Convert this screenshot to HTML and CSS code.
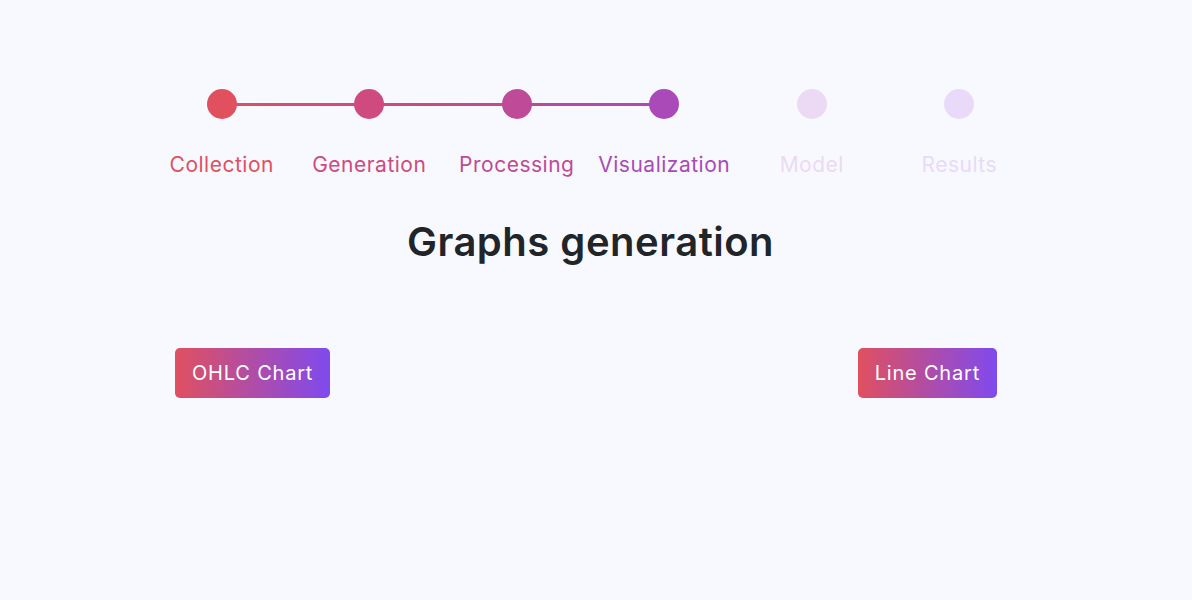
FILE: index.html
```html
<!DOCTYPE html>
<html>
<head>
<meta charset="utf-8">
<link rel="stylesheet" href="styles.css">
</head>
<body>
<main class="wrap">
  <ol class="steps">
    <li class="step done s1"><span class="dot"></span><span class="label">Collection</span></li>
    <li class="step done s2"><span class="dot"></span><span class="label">Generation</span></li>
    <li class="step done s3"><span class="dot"></span><span class="label">Processing</span></li>
    <li class="step current s4"><span class="dot"></span><span class="label">Visualization</span></li>
    <li class="step todo s5"><span class="dot"></span><span class="label">Model</span></li>
    <li class="step todo s6"><span class="dot"></span><span class="label">Results</span></li>
  </ol>
  <h1 class="title">Graphs generation</h1>
  <div class="actions">
    <button class="btn">OHLC Chart</button>
    <button class="btn">Line Chart</button>
  </div>
</main>
</body>
</html>
```

FILE: styles.css
```css
html, body {
  margin: 0;
  padding: 0;
  background: #f8f9fe;
  font-family: Inter, "Noto Sans", "Liberation Sans", sans-serif;
}
.wrap {
  width: 885px;
  margin-left: 148px;
  padding-top: 89px;
}
.steps {
  list-style: none;
  margin: 0;
  padding: 0;
  display: grid;
  grid-template-columns: repeat(6, 1fr);
}
.step {
  position: relative;
  display: flex;
  flex-direction: column;
  align-items: center;
}
.dot {
  width: 30px;
  height: 30px;
  border-radius: 50%;
  position: relative;
  z-index: 1;
}
.step::after {
  content: "";
  position: absolute;
  top: 14px;
  left: 50%;
  width: 100%;
  height: 3px;
}
.label {
  margin-top: 33px;
  font-size: 21px;
  line-height: 25px;
  letter-spacing: 0.5px;
  white-space: nowrap;
}
.s1 .dot { background: #e0505f; }
.s2 .dot { background: #cf4a7f; }
.s3 .dot { background: #be4a98; }
.s4 .dot { background: #a94ab8; }
.s5 .dot { background: #ecdaf4; }
.s6 .dot { background: #e9daf9; }
.s1 .label { color: #e0505f; }
.s2 .label { color: #cf4a7f; }
.s3 .label { color: #be4a98; }
.s4 .label { color: #a94ab8; }
.s5 .label { color: #ecdaf4; }
.s6 .label { color: #e9daf9; }
.s1::after { background: linear-gradient(90deg, #e0505f, #cf4a7f); }
.s2::after { background: linear-gradient(90deg, #cf4a7f, #be4a98); }
.s3::after { background: linear-gradient(90deg, #be4a98, #a94ab8); }
.title {
  margin: 41px 0 0;
  text-align: center;
  font-size: 40px;
  line-height: 48px;
  font-weight: 600;
  color: #212529;
  letter-spacing: 0.5px;
}
.actions {
  display: flex;
  justify-content: space-between;
  margin-top: 82px;
  padding: 0 36px 0 27px;
}
.btn {
  border: 0;
  border-radius: 5px;
  height: 50px;
  padding: 0 17px;
  font-family: inherit;
  font-size: 20px;
  letter-spacing: 0.8px;
  color: #fff;
  background: linear-gradient(90deg, #e0505f, #7f4aee);
  cursor: pointer;
}
```
